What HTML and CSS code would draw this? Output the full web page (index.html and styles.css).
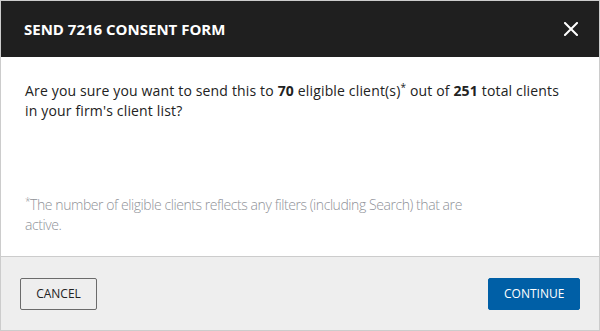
FILE: index.html
```html
<!DOCTYPE html>
<html>
<head>
<meta charset="utf-8">
<link rel="stylesheet" href="styles.css">
</head>
<body>
<div class="modal">
  <div class="modal-header">
    <h1 class="modal-title">SEND 7216 CONSENT FORM</h1>
    <button class="close-btn" aria-label="Close">
      <svg width="14" height="14" viewBox="0 0 14 14"><path d="M1 1 L13 13 M13 1 L1 13" stroke="#fff" stroke-width="2" stroke-linecap="square"/></svg>
    </button>
  </div>
  <div class="modal-body">
    <p class="question">Are you sure you want to send this to <b>70</b> eligible client(s)<sup>*</sup> out of <b>251</b> total clients in your firm's client list?</p>
    <p class="footnote"><sup>*</sup>The number of eligible clients reflects any filters (including Search) that are active.</p>
  </div>
  <div class="modal-footer">
    <button class="btn btn-secondary">CANCEL</button>
    <button class="btn btn-primary">CONTINUE</button>
  </div>
</div>
</body>
</html>
```
FILE: styles.css
```css
* { box-sizing: border-box; }
html, body { margin: 0; padding: 0; }
body {
  font-family: "Open Sans", "Liberation Sans", sans-serif;
  background: #fff;
}
.modal {
  width: 600px;
  height: 331px;
  border: 1px solid #cccccc;
  display: flex;
  flex-direction: column;
}
.modal-header {
  height: 56px;
  background: #1f1f1f;
  display: flex;
  align-items: center;
  justify-content: space-between;
  padding: 0 21px 0 23px;
}
.modal-title {
  margin: 0;
  color: #fff;
  font-size: 15px;
  font-weight: 700;
}
.close-btn {
  background: none;
  border: none;
  padding: 0;
  width: 14px;
  height: 14px;
  display: flex;
}
.modal-body {
  flex: 1;
  display: flex;
  flex-direction: column;
  padding: 24px 24px 21px 24px;
  border-bottom: 1px solid #cccccc;
}
.question {
  margin: 0;
  font-size: 14px;
  letter-spacing: 0.16px;
  line-height: 20px;
  color: #222;
}
.question b { font-weight: 700; }
sup {
  font-size: 10px;
  line-height: 0;
  vertical-align: 5px;
}
.footnote {
  margin: auto 0 0 0;
  max-width: 450px;
  font-size: 14px;
  font-weight: 300;
  letter-spacing: -0.43px;
  line-height: 20px;
  color: #8f9298;
}
.modal-footer {
  height: 73px;
  background: #eeeeee;
  display: flex;
  align-items: center;
  justify-content: space-between;
  padding: 0 19px;
}
.btn {
  height: 32px;
  font-family: "Open Sans", "Liberation Sans", sans-serif;
  font-size: 12px;
  border-radius: 2px;
  padding: 0 15px;
  cursor: pointer;
}
.btn-secondary {
  background: transparent;
  border: 1px solid #6b6b6b;
  color: #222;
  width: 77px;
}
.btn-primary {
  background: #005fa6;
  border: 1px solid #005fa6;
  color: #fff;
  width: 92px;
}
```
